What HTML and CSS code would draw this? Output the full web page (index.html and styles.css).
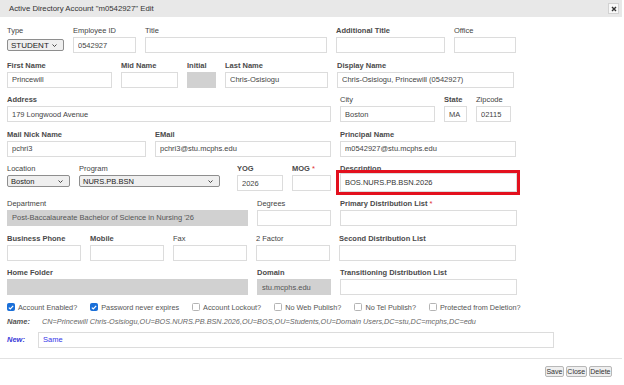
FILE: index.html
```html
<!DOCTYPE html>
<html lang="en">
<head>
    <meta charset="UTF-8">
    <title>Active Directory Account Edit</title>
    <link rel="stylesheet" href="styles.css">
</head>
<body>
    <div class="dialog">
        <div class="titlebar">
            <span class="title">Active Directory Account "m0542927" Edit</span>
            <button class="close-btn" type="button">
                <svg width="6" height="6" viewBox="0 0 6 6"><path d="M1 1L5 5M5 1L1 5" stroke="#333" stroke-width="1.4"/></svg>
            </button>
        </div>

        <form class="form">
            <div class="row">
                <div class="field f-type">
                    <label>Type</label>
                    <div class="select sel-type">STUDENT
                        <svg width="5" height="3" viewBox="0 0 5 3"><path d="M0.5 0.5L2.5 2.5L4.5 0.5" fill="none" stroke="#333" stroke-width="0.9"/></svg>
                    </div>
                </div>
                <div class="field f-emp"><label>Employee ID</label><input value="0542927"></div>
                <div class="field f-title"><label>Title</label><input value=""></div>
                <div class="field f-addtitle"><label class="b">Additional Title</label><input value=""></div>
                <div class="field f-office"><label>Office</label><input value=""></div>
            </div>

            <div class="row">
                <div class="field f-first"><label class="b">First Name</label><input value="Princewill"></div>
                <div class="field f-mid"><label class="b">Mid Name</label><input value=""></div>
                <div class="field f-initial"><label class="b">Initial</label><input class="gray" value=""></div>
                <div class="field f-last"><label class="b">Last Name</label><input value="Chris-Osisiogu"></div>
                <div class="field f-display"><label class="b">Display Name</label><input value="Chris-Osisiogu, Princewill (0542927)"></div>
            </div>

            <div class="row">
                <div class="field f-address"><label class="b">Address</label><input value="179 Longwood Avenue"></div>
                <div class="field f-city"><label>City</label><input value="Boston"></div>
                <div class="field f-state"><label class="b">State</label><input value="MA"></div>
                <div class="field f-zip"><label>Zipcode</label><input value="02115"></div>
            </div>

            <div class="row">
                <div class="field f-nick"><label class="b">Mail Nick Name</label><input value="pchri3"></div>
                <div class="field f-email"><label class="b">EMail</label><input value="pchri3@stu.mcphs.edu"></div>
                <div class="field f-principal"><label class="b">Principal Name</label><input value="m0542927@stu.mcphs.edu"></div>
            </div>

            <div class="row">
                <div class="field f-location">
                    <label>Location</label>
                    <div class="select">Boston
                        <svg width="5" height="3" viewBox="0 0 5 3"><path d="M0.5 0.5L2.5 2.5L4.5 0.5" fill="none" stroke="#333" stroke-width="0.9"/></svg>
                    </div>
                </div>
                <div class="field f-program">
                    <label>Program</label>
                    <div class="select">NURS.PB.BSN
                        <svg width="5" height="3" viewBox="0 0 5 3"><path d="M0.5 0.5L2.5 2.5L4.5 0.5" fill="none" stroke="#333" stroke-width="0.9"/></svg>
                    </div>
                </div>
                <div class="field f-yog"><label class="b">YOG</label><input value="2026"></div>
                <div class="field f-mog"><label class="b">MOG <span class="req">*</span></label><input value=""></div>
                <div class="field f-desc">
                    <label class="b">Description</label>
                    <div class="desc-box"><input value="BOS.NURS.PB.BSN.2026"></div>
                </div>
            </div>

            <div class="row">
                <div class="field f-dept"><label>Department</label><input class="gray" value="Post-Baccalaureate Bachelor of Science in Nursing '26"></div>
                <div class="field f-degrees"><label>Degrees</label><input value=""></div>
                <div class="field f-list"><label class="b">Primary Distribution List <span class="req">*</span></label><input value=""></div>
            </div>

            <div class="row">
                <div class="field f-phone"><label class="b">Business Phone</label><input value=""></div>
                <div class="field f-phone"><label class="b">Mobile</label><input value=""></div>
                <div class="field f-phone"><label>Fax</label><input value=""></div>
                <div class="field f-phone"><label>2 Factor</label><input value=""></div>
                <div class="field f-list"><label class="b">Second Distribution List</label><input value=""></div>
            </div>

            <div class="row">
                <div class="field f-dept"><label class="b">Home Folder</label><input class="gray" value=""></div>
                <div class="field f-degrees"><label class="b">Domain</label><input class="gray" value="stu.mcphs.edu"></div>
                <div class="field f-list"><label class="b">Transitioning Distribution List</label><input value=""></div>
            </div>

            <div class="checks">
                <label class="check"><span class="box on"><svg width="6" height="5" viewBox="0 0 6 5"><path d="M0.8 2.6L2.3 4L5.2 0.9" fill="none" stroke="#fff" stroke-width="1.2"/></svg></span>Account Enabled?</label>
                <label class="check"><span class="box on"><svg width="6" height="5" viewBox="0 0 6 5"><path d="M0.8 2.6L2.3 4L5.2 0.9" fill="none" stroke="#fff" stroke-width="1.2"/></svg></span>Password never expires</label>
                <label class="check"><span class="box"></span>Account Lockout?</label>
                <label class="check"><span class="box"></span>No Web Publish?</label>
                <label class="check"><span class="box"></span>No Tel Publish?</label>
                <label class="check"><span class="box"></span>Protected from Deletion?</label>
            </div>

            <div class="dn-row">
                <span class="dn-label">Name:</span>
                <span class="dn-value">CN=Princewill Chris-Osisiogu,OU=BOS.NURS.PB.BSN.2026,OU=BOS,OU=Students,OU=Domain Users,DC=stu,DC=mcphs,DC=edu</span>
            </div>

            <div class="new-row">
                <span class="new-label">New:</span>
                <input class="new-input" value="Same">
            </div>
        </form>

        <div class="divider"></div>

        <div class="actions">
            <button type="button">Save</button>
            <button type="button">Close</button>
            <button type="button">Delete</button>
        </div>
    </div>
</body>
</html>
```

FILE: styles.css
```css
body {
    margin: 0;
    font-family: "Liberation Sans", Arial, sans-serif;
    font-size: 7.5px;
    color: #333;
    background-color: #fff;
}

.dialog {
    width: 622px;
}

.titlebar {
    height: 17px;
    background-color: #e8e8e8;
    display: flex;
    align-items: center;
    justify-content: space-between;
    padding: 0 3px 0 9px;
}

.title {
    font-size: 7.8px;
}

.close-btn {
    width: 11px;
    height: 11px;
    padding: 0;
    border: 1px solid #d2d2d2;
    background-color: #f8f8f8;
    display: flex;
    align-items: center;
    justify-content: center;
}

.form {
    padding: 8px 0 0 7px;
}

.row {
    display: flex;
    gap: 9px;
    margin-bottom: 6.6px;
}

.field {
    display: flex;
    flex-direction: column;
}

.field > label {
    height: 11px;
    line-height: 11px;
    margin-bottom: 1px;
    color: #444;
    white-space: nowrap;
}

.field > label.b {
    font-weight: bold;
    color: #4a4a4a;
}

.req {
    color: #e03030;
    font-weight: normal;
}

input {
    font: inherit;
}

.field input {
    box-sizing: border-box;
    width: 100%;
    height: 16px;
    margin: 0;
    padding: 0 4px;
    border: 1px solid #dcdcdc;
    background-color: #fff;
    color: #444;
    outline: none;
}

.field input.gray {
    background-color: #d1d1d1;
    border-color: #d1d1d1;
    color: #555;
}

.select {
    box-sizing: border-box;
    height: 12px;
    display: flex;
    align-items: center;
    justify-content: space-between;
    padding: 0 6px 0 3px;
    border: 1px solid #8e8e8e;
    border-radius: 2px;
    background-color: #efefef;
    color: #222;
}

.sel-type {
    margin-top: 2px;
    font-size: 8px;
}

/* column widths */
.f-type { width: 57px; }
.f-emp { width: 63px; }
.f-title { width: 182px; }
.f-addtitle { width: 109px; }
.f-office { width: 62px; }

.f-first { width: 105px; }
.f-mid { width: 57px; }
.f-initial { width: 29px; }
.f-last { width: 103px; }
.f-display { width: 177px; }

.f-address { width: 324px; }
.f-city { width: 95px; }
.f-state { width: 23px; }
.f-zip { width: 35px; }

.f-nick { width: 139px; }
.f-email { width: 176px; }
.f-principal { width: 176px; }

.f-location { width: 63px; }
.f-program { width: 141px; }
.f-yog { width: 46px; margin-left: 8px; }
.f-mog { width: 39px; }
.f-desc { width: 177px; }

.f-dept { width: 241px; }
.f-degrees { width: 74px; }
.f-list { width: 177px; }
.f-phone { width: 74px; }

.desc-box {
    position: relative;
    margin: -2px 0 -1px;
}

.desc-box input {
    height: 19px;
    color: #333;
}

.desc-box::after {
    content: "";
    position: absolute;
    top: -3px;
    right: -3px;
    bottom: -3px;
    left: -4px;
    border: 3px solid #e3101e;
    pointer-events: none;
}

.checks {
    display: flex;
    align-items: center;
    height: 11px;
    margin-top: 3.5px;
    color: #555;
}

.check {
    display: flex;
    align-items: center;
    gap: 3px;
    margin-right: 13px;
    white-space: nowrap;
    font-size: 7.3px;
}

.box {
    box-sizing: border-box;
    width: 8px;
    height: 8px;
    border: 1px solid #b4b4b4;
    border-radius: 1.5px;
    background-color: #fff;
    display: flex;
    align-items: center;
    justify-content: center;
}

.box.on {
    background-color: #1a6fd8;
    border-color: #1a6fd8;
}

.dn-row {
    display: flex;
    align-items: center;
    height: 11px;
    margin-top: 3px;
}

.dn-label {
    width: 35px;
    font-weight: bold;
    font-style: italic;
    color: #555;
}

.dn-value {
    font-style: italic;
    color: #666;
    font-size: 7.3px;
}

.new-row {
    display: flex;
    align-items: center;
    margin-top: 5px;
}

.new-label {
    width: 31px;
    font-weight: bold;
    font-style: italic;
    color: #3b3bd9;
}

.new-input {
    box-sizing: border-box;
    width: 516px;
    height: 16px;
    margin: 0;
    padding: 0 4px;
    border: 1px solid #dcdcdc;
    color: #3535e8;
    outline: none;
}

.divider {
    margin-top: 10.5px;
    border-top: 1px solid #e2e2e2;
}

.actions {
    display: flex;
    justify-content: flex-end;
    gap: 2px;
    padding: 6.5px 10px 0 0;
}

.actions button {
    font: inherit;
    font-size: 7px;
    height: 11px;
    line-height: 9px;
    padding: 0 0.5px;
    border: 1px solid #b8b8b8;
    border-radius: 2px;
    background-color: #efefef;
    color: #333;
}
```
